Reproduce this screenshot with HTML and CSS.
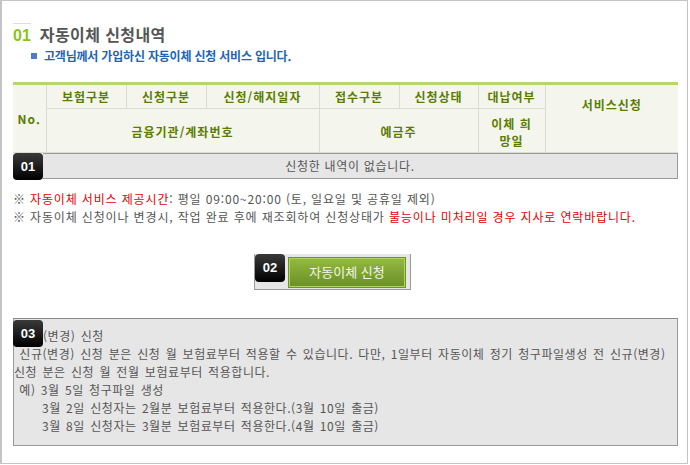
FILE: index.html
```html
<!DOCTYPE html>
<html lang="ko">
  <head>
    <meta charset="UTF-8" />
    <title>자동이체 신청내역</title>
    <link rel="stylesheet" href="styles.css">
  </head>
  <body>
    <div class="frame">
      <div class="title">
        <span class="title-num">01</span>
        <span class="title-text">자동이체 신청내역</span>
      </div>
      <p class="subtitle"><span class="bullet"></span>고객님께서 가입하신 자동이체 신청 서비스 입니다.</p>

      <table class="list">
        <colgroup>
          <col class="c-no" />
          <col class="c-80" />
          <col class="c-80" />
          <col class="c-date" />
          <col class="c-80" />
          <col class="c-79" />
          <col class="c-pay" />
          <col />
        </colgroup>
        <thead>
          <tr class="row-a">
            <th rowspan="2">No.</th>
            <th>보험구분</th>
            <th>신청구분</th>
            <th>신청/해지일자</th>
            <th>접수구분</th>
            <th>신청상태</th>
            <th>대납여부</th>
            <th rowspan="2" class="last">서비스신청</th>
          </tr>
          <tr class="row-b">
            <th colspan="3">금융기관/계좌번호</th>
            <th colspan="2">예금주</th>
            <th>이체 희<br />망일</th>
          </tr>
        </thead>
      </table>

      <div class="empty-row">
        <span class="badge">01</span>
        <div class="empty-text">신청한 내역이 없습니다.</div>
      </div>

      <div class="notes">
        <p>※ <span class="red">자동이체 서비스 제공시간</span>: 평일 09:00~20:00 (토, 일요일 및 공휴일 제외)</p>
        <p>※ 자동이체 신청이나 변경시, 작업 완료 후에 재조회하여 신청상태가 <span class="red">불능이나 미처리일 경우 지사로 연락바랍니다.</span></p>
      </div>

      <div class="apply">
        <div class="apply-box">
          <span class="badge">02</span>
          <a href="#" class="btn">자동이체 신청</a>
        </div>
      </div>

      <div class="info">
        <span class="badge badge-info">03</span>
        <div class="line first">(변경) 신청</div>
        <div class="line">&nbsp;신규(변경) 신청 분은 신청 월 보험료부터 적용할 수 있습니다. 다만, 1일부터 자동이체 정기 청구파일생성 전 신규(변경)</div>
        <div class="line">신청 분은 신청 월 전월 보험료부터 적용합니다.</div>
        <div class="line">&nbsp;예) 3월 5일 청구파일 생성</div>
        <div class="line indent">3월 2일 신청자는 2월분 보험료부터 적용한다.(3월 10일 출금)</div>
        <div class="line indent">3월 8일 신청자는 3월분 보험료부터 적용한다.(4월 10일 출금)</div>
      </div>
    </div>
  </body>
</html>
```

FILE: styles.css
```css
* {
  margin: 0;
  padding: 0;
  box-sizing: border-box;
}

body {
  font-family: "Noto Sans CJK KR", "Noto Sans", sans-serif;
  font-size: 12px;
  color: #555;
  background-color: #fff;
}

.frame {
  width: 688px;
  height: 464px;
  border: 1px solid #c4c4c4;
  border-left-width: 2px;
  padding: 22px 0 0 11px;
}

.title {
  display: flex;
  align-items: baseline;
  gap: 9px;
  height: 25px;
  line-height: 22px;
  position: relative;
}

.title::before {
  content: "";
  position: absolute;
  left: 0;
  top: 0;
  width: 18px;
  height: 1px;
  background-color: #ddd;
}

.title-num {
  color: #8cc21c;
  font-weight: 700;
  font-size: 16px;
  font-family: "Liberation Sans", sans-serif;
  padding-top: 2px;
}

.title-text {
  color: #555;
  font-weight: 700;
  font-size: 16px;
  letter-spacing: 0.4px;
}

.subtitle {
  color: #1e64b4;
  font-weight: 700;
  font-size: 12px;
  line-height: 16px;
  padding-left: 18px;
  display: flex;
  align-items: center;
  gap: 7px;
  letter-spacing: -0.2px;
}

.bullet {
  display: inline-block;
  width: 6px;
  height: 6px;
  background-color: #4b7dc2;
}

.list {
  width: 665px;
  margin-top: 18px;
  border-collapse: collapse;
  table-layout: fixed;
  background-color: #f4f5ec;
  border-top: 3px solid #b8d66a;
}

.c-no { width: 33px; }
.c-80 { width: 80px; }
.c-date { width: 113px; }
.c-79 { width: 79px; }
.c-pay { width: 67px; }

.list th {
  color: #5a7d00;
  font-weight: 700;
  font-size: 12px;
  line-height: 17px;
  letter-spacing: 1px;
  border: 1px solid #dcdcd4;
  text-align: center;
}

.list tr:first-child th {
  border-top: 0;
}

.list th:first-child {
  border-left: 0;
}

.list th.last {
  border-right: 0;
  padding-bottom: 28px;
}

.row-a th {
  height: 25px;
}

.row-b th {
  height: 44px;
  padding-top: 2px;
}

.empty-row {
  display: flex;
  width: 665px;
  height: 27px;
}

.badge {
  display: inline-block;
  width: 30px;
  height: 27px;
  background: linear-gradient(#3a3a3a, #000);
  border-radius: 4px;
  color: #fff;
  font-family: "Liberation Sans", sans-serif;
  font-weight: 700;
  font-size: 13px;
  line-height: 27px;
  text-align: center;
  flex-shrink: 0;
}

.empty-text {
  flex: 1;
  background-color: #e6e6e6;
  border: 1px solid #9a9a9a;
  border-left: 0;
  margin-bottom: 1px;
  padding-right: 20px;
  text-align: center;
  line-height: 23px;
  color: #555;
  letter-spacing: 0.7px;
}

.notes {
  margin-top: 10px;
  line-height: 18px;
  font-size: 12px;
  color: #555;
  letter-spacing: 0.85px;
}

.red {
  color: #e60000;
}

.apply {
  display: flex;
  justify-content: center;
  margin-top: 28px;
  padding-right: 35px;
}

.apply-box {
  display: flex;
  gap: 3px;
  width: 157px;
  height: 36px;
  border: 1px solid #9a9a9a;
  border-top: 0;
  background-color: #e6e6e6;
}

.apply-box .badge {
  height: 28px;
  line-height: 28px;
}

.btn {
  display: block;
  width: 118px;
  height: 31px;
  margin-top: 3px;
  background: linear-gradient(#94b944, #6a8f24);
  border: 1px solid #6f9327;
  box-shadow: inset 0 0 0 1px #b0d45e;
  color: #f2f6e6;
  text-align: center;
  text-decoration: none;
  font-size: 13px;
  line-height: 28px;
}

.info {
  position: relative;
  width: 665px;
  height: 128px;
  margin-top: 28px;
  background-color: #e6e6e6;
  border: 1px solid #9a9a9a;
  border-top-color: #8a8a8a;
  padding-top: 8px;
}

.badge-info {
  position: absolute;
  left: -1px;
  top: 1px;
}

.line {
  line-height: 18px;
  white-space: nowrap;
  color: #555;
  letter-spacing: 0.55px;
  word-spacing: 1.4px;
}

.line.first {
  padding-left: 29px;
}

.line.indent {
  padding-left: 28px;
}
```
